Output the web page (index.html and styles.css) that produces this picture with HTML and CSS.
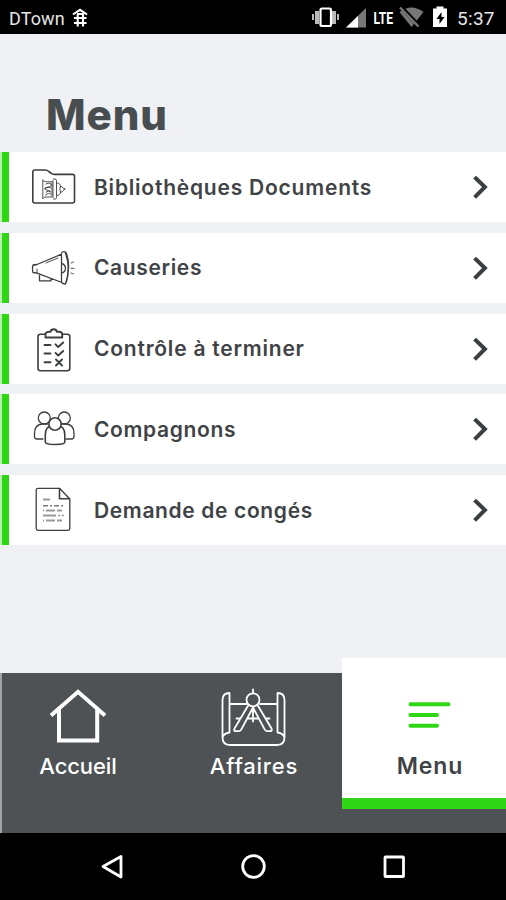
FILE: index.html
```html
<!DOCTYPE html>
<html lang="fr">
<head>
<meta charset="utf-8">
<meta name="viewport" content="width=device-width">
<title>Menu</title>
<link rel="stylesheet" href="styles.css">
</head>
<body>
<div class="screen">
  <header class="status">
    <span class="carrier">DTown</span>
    <svg class="hut" viewBox="72 8 18 20" width="18" height="20" fill="none" stroke="#fff" stroke-width="2.1"><path d="M73 14.500l7-4.700 7 4.700M77 14h6.500M74 18h12.500M74 23h12.500M77.700 14v12.500M83 14v12.500"/></svg>
    <svg class="signals" viewBox="310 0 142 34" width="142" height="34">
      <g fill="#bbb"><path d="M312 14h2v6h-2zM315 11h4v13h-4zM332 11h4v13h-4zM337 14h2v6h-2z"/></g>
      <rect x="320.500" y="8.500" width="10.500" height="17.500" rx="1.500" fill="#000" stroke="#fff" stroke-width="2.200"/>
      <path d="M366 8v19.500h-20z" fill="#777"/><path d="M358 16v11.500h-12z" fill="#fff"/>
      <text class="lte" x="373.500" y="24" textLength="19.500" lengthAdjust="spacingAndGlyphs">LTE</text>
      <path d="M399.500 12q12-9 24 0L411.500 27z" fill="#777"/><path d="M400 6l20 21" stroke="#000" stroke-width="4"/><path d="M400 7.500l18.500 19" stroke="#777" stroke-width="2.400"/>
      <path d="M436.500 6.500h7v2h3.500v18.500h-14V8.500h3.500z" fill="#fff"/><path d="M441.500 12l-5 7h3v5l5-7h-3z" fill="#000"/>
    </svg>
    <span class="clock">5:37</span>
  </header>

  <main class="content">
    <h1 class="title">Menu</h1>
    <nav class="list">
      <a class="row">
        <svg class="icon" viewBox="28 152 52 70"><path class="frame" d="M32.800 201V172q0-2 2-2h10.500q2 0 3.500 1.500l2.700 2q1 .9 3 .9h18q2 0 2 2V201q0 2-2 2H34.800q-2 0-2-2z"/><path class="fine" d="M43 180q1 2 3 1.800h6V197h-6q-2-.2-3 1.500zM53.500 179h1.500q1.500 0 1.500 1.500v17q0 1.500-1.500 1.500h-1.500M53 180.500v17M57 183q4 .5 3.500 3.500M57 195.500q4-.5 3.500-3.500M60.500 186.500q1.500-1 2.500 1.500l2.300 1-2.300 1.500q-1 2.500-2.500 1.500-1.500-2.700 0-5.500M46 184q3-2 5 0t-4 3.500 3 3.500M45 188q3-2 6 0M46 192q2-2 5 0M45.500 195q3-3 5.500-1"/></svg>
        <span class="label wide">Bibliothèques Documents</span>
        <svg class="chevron" viewBox="0 0 18 26"><path d="M5 4.500L13.900 13 5 22"/></svg>
      </a>
      <a class="row">
        <svg class="icon" viewBox="28 233 52 70"><path class="line" d="M61.500 254.200L37 264.500q-2.500.5-4 .5-1 3.500 0 7.500 2 0 4 .7L62 282.500M61.500 254.200V282.500M61.500 253q1-1.800 3.500-1.200 3.200 8 3.200 16T65.500 284q-3 0-3.500-1.500M66 252.500q3 7 2.500 16T66 283M39.500 274v6.800H51v-2.500M61.500 263.500q4 1 4 4.800t-4 4.800"/><path class="fine" d="M46 263l12-5M37 269v4M71 263l2.500-1M71 268.300h3M71 273l2.500 1"/></svg>
        <span class="label">Causeries</span>
        <svg class="chevron" viewBox="0 0 18 26"><path d="M5 4.500L13.900 13 5 22"/></svg>
      </a>
      <a class="row">
        <svg class="icon" viewBox="28 313.500 52 70"><rect class="frame" x="38" y="333.800" width="31.800" height="36.400" rx="2.500"/><path class="heavy white" d="M45.500 337v-4q1-1.800 4-1.800h1q.5-2.500 3.200-2.500t3.200 2.500h1.500q3 0 3.800 1.800v4z"/><path class="heavy" d="M44.500 344.500h6M44.500 353h6M44.500 361.800h6M55.500 343.800l2.700 2.700 5-4.500M55.500 352.300l2.700 2.700 5-4.500M56 359l6 6M62 359l-6 6"/></svg>
        <span class="label wide">Contrôle à terminer</span>
        <svg class="chevron" viewBox="0 0 18 26"><path d="M5 4.500L13.900 13 5 22"/></svg>
      </a>
      <a class="row">
        <svg class="icon" viewBox="28 394 52 70"><g class="line"><circle cx="44.300" cy="418" r="6"/><circle cx="64.300" cy="418" r="6"/><path d="M43 439h-6q-2.500 0-2.500-2.500v-3q0-9 8-9.500h5M66 439h5.500q2.500 0 2.500-2.500v-3q0-9-8-9.500h-4"/></g><g class="frame white"><path d="M45.300 442v-7q0-9 7-9h5.500q7 0 7 9v7q0 2.500-9.700 2.500t-9.800-2.500z"/><circle cx="55" cy="424" r="6.200"/></g></svg>
        <span class="label">Compagnons</span>
        <svg class="chevron" viewBox="0 0 18 26"><path d="M5 4.500L13.900 13 5 22"/></svg>
      </a>
      <a class="row">
        <svg class="icon" viewBox="28 475 52 70"><path class="line" d="M59.500 488.300H38q-1.800 0-1.800 1.800v38.500q0 1.800 1.800 1.800h30q1.800 0 1.800-1.800V499z"/><path class="frame" d="M59.500 488.500v10.300h10"/><path class="gray" d="M43 499.500h7M46 510.500h9M57 510.500h5M43 515.500h13M46 520.500h9M57 520.500h5"/><path class="dots" d="M43 505.800h20.500M43 510.500h1M58.500 515.500h1.500M62 515.500h1.500M43 520.500h1"/></svg>
        <span class="label">Demande de congés</span>
        <svg class="chevron" viewBox="0 0 18 26"><path d="M5 4.500L13.900 13 5 22"/></svg>
      </a>
    </nav>
  </main>

  <nav class="tabs">
    <a class="tab home">
      <svg viewBox="44 686 68 62" width="68" height="62" fill="none" stroke="#fff" stroke-width="4"><path d="M51 715.500L78 691.800l27 23.700M59 709v31.500h38.200V709"/></svg>
      <span>Accueil</span>
    </a>
    <a class="tab affairs">
      <svg viewBox="220 686.500 68 62" width="68" height="62" fill="none" stroke="#fff" stroke-width="1.800" stroke-linecap="round" stroke-linejoin="round"><path d="M229.500 733V693.500q-7 0-7 7V738q0 7.500 7.500 7.500h47q7.500 0 7.500-7.500V700.500q0-7-7-7V733M222.500 738q1-4 7-5M284.500 738q-1-4-7-5M230 704.500h16.500M260 704.500h17M253 690v3.500"/><circle cx="253" cy="700.300" r="6.500"/><path d="M248.500 705.500L234.500 729q-1 2.500 1 2.700h3.500q1.500 0 2.500-2L253 708l11.500 21.700q1 2 2.500 2h3.500q2-.2 1-2.700L257.500 705.500M253 709v13M236.500 719h4M247.500 719h11M265.500 719h4"/></svg>
      <span>Affaires</span>
    </a>
    <a class="tab active">
      <svg viewBox="396 686 68 62" width="68" height="62" fill="none" stroke="#2fd615" stroke-width="4" stroke-linecap="round"><path d="M410.500 704.200h38M410.500 715h26.500M410.500 725.800h26.500"/></svg>
      <span>Menu</span>
    </a>
  </nav>

  <footer class="system">
    <svg viewBox="0 0 32 32" width="32" height="32"><path d="M6 16.500L24 6.500v20.500z"/></svg>
    <svg viewBox="0 0 32 32" width="32" height="32"><circle cx="15.500" cy="16.500" r="10.800"/></svg>
    <svg viewBox="0 0 32 32" width="32" height="32"><rect x="7" y="7" width="18.500" height="19.500" rx=".5"/></svg>
  </footer>
</div>
</body>
</html>
```
FILE: styles.css
```css
* { box-sizing: border-box; }
body { margin: 0; font-family: Inter, "Liberation Sans", sans-serif; color: #3f4346; }
.screen { width: 506px; height: 900px; display: flex; flex-direction: column; background: #eff1f5; overflow: hidden; }
.status { height: 34px; flex: none; display: flex; align-items: center; background: #000; color: #e6e6e6; font-family: Roboto, sans-serif; padding-left: 9px; }
.carrier { width: 63px; padding-top: 3px; font-size: 18px; line-height: 20px; letter-spacing: .1px; }
.hut { margin-top: 2px; }
.signals { margin-left: 220px; }
.lte { font: 700 17px Roboto, sans-serif; fill: #fff; }
.clock { margin-left: 5px; padding-top: 3px; font-size: 19px; line-height: 20px; letter-spacing: .3px; }
.content { flex: 1; min-height: 0; }
.title { margin: 0; padding: 56px 0 0 46px; height: 118px; font-size: 42px; line-height: 50px; font-weight: 800; letter-spacing: .9px; color: #484d50; }
.list { display: flex; flex-direction: column; gap: 10.750px; }
.row { height: 70px; display: flex; align-items: center; background: linear-gradient(to right, #b9efb1 2px, #2fd615 2px, #2fd615 9px, #fff 9px); padding: 0 17px 0 28px; }
.icon { width: 52px; height: 70px; flex: none; fill: none; stroke: #3b3f42; stroke-linecap: round; stroke-linejoin: round; }
.heavy { stroke-width: 1.900; }
.frame { stroke-width: 1.600; }
.line { stroke-width: 1.300; }
.fine { stroke-width: .9; }
.white { fill: #fff; }
.gray { stroke: #999; stroke-width: 2; stroke-linecap: butt; }
.dots { stroke-width: 1.600; stroke-dasharray: 5 2 2 2; stroke: #777; stroke-linecap: butt; }
.label { flex: 1; margin-left: 14px; font-size: 21px; font-weight: 600; letter-spacing: .64px; white-space: nowrap; }
.wide { letter-spacing: .78px; }
.chevron { width: 18px; height: 26px; fill: none; stroke: #3b3f42; stroke-width: 4; stroke-linecap: square; }
.tabs { height: 160px; flex: none; display: flex; background: #4e5254; border-left: 2px solid #a0a4a6; color: #fff; }
.tab { display: flex; flex-direction: column; align-items: center; font-size: 22px; font-weight: 500; line-height: 28px; letter-spacing: .4px; }
.tab span { margin-top: 4px; }
.home { width: 152px; padding-top: 13px; letter-spacing: -.1px; }
.affairs { width: 188px; padding-top: 13px; padding-left: 12px; letter-spacing: .8px; }
.active { width: 164px; height: 151px; margin-top: -15px; padding: 28px 0 0 12px; background: #fff; color: #3f4346; border-bottom: 11px solid #2fd615; font-size: 23px; font-weight: 600; letter-spacing: .9px; }
.system { height: 67px; flex: none; display: flex; align-items: center; justify-content: space-between; padding: 0 96px 2px 97px; background: #000; }
.system svg { fill: none; stroke: #fff; stroke-width: 2.800; stroke-linejoin: round; }
```
